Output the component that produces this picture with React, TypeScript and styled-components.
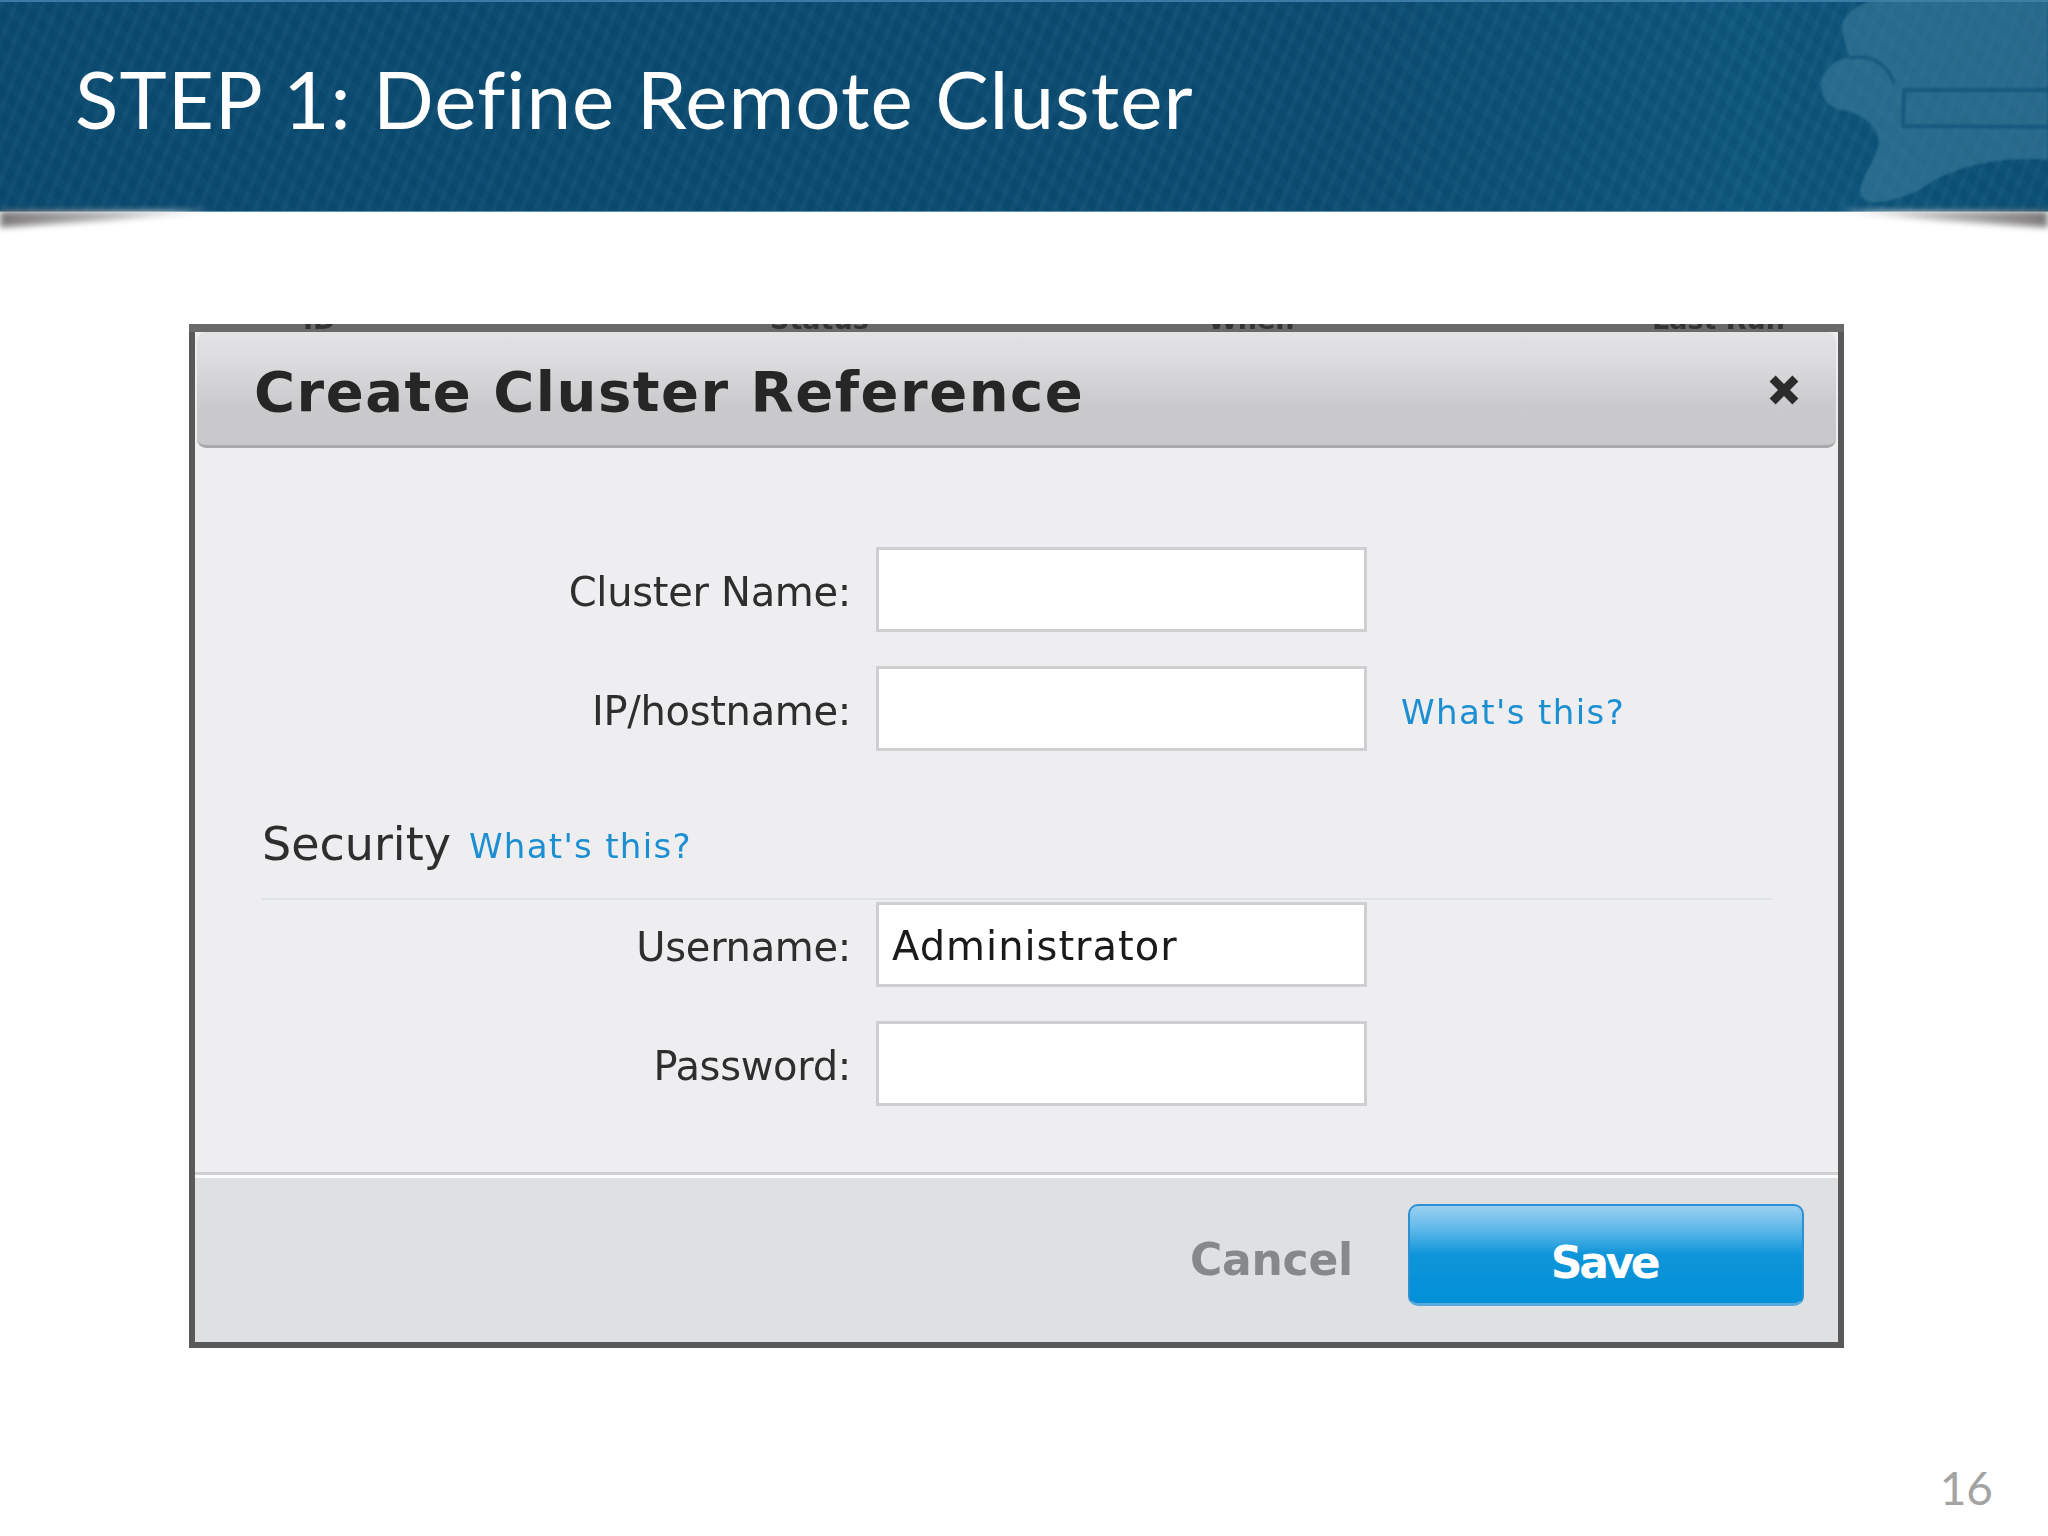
import React from "react";
import styled, { createGlobalStyle } from "styled-components";

const GlobalStyle = createGlobalStyle`
  html, body {
    margin: 0;
    padding: 0;
    background: #fff;
  }
`;

const HeaderLogo = () => (
  <LogoSvg viewBox="0 0 248 212">
    <path
      d="M43 22 C50 8 66 0 84 0 L248 0 L248 160 C205 156 165 164 135 180 C118 192 100 200 78 202 C58 204 58 190 64 178 C72 160 84 148 76 132 C70 120 56 112 42 110 C26 108 18 92 22 80 C26 66 38 58 50 58 C46 46 40 32 43 22 Z"
      fill="#3f7f9f"
      fillOpacity="0.55"
    />
    <path
      d="M248 90 L104 90 L103 126 L248 127"
      fill="none"
      stroke="#15577e"
      strokeWidth="3.5"
    />
    <path
      d="M50 58 C68 54 88 62 94 84"
      fill="none"
      stroke="#15577e"
      strokeWidth="3"
    />
  </LogoSvg>
);

const App = () => {
  return (
    <Slide>
      <GlobalStyle />
      <Banner>
        <BannerTitle>STEP 1: Define Remote Cluster</BannerTitle>
        <HeaderLogo />
        <CornerShadow $side="left" />
        <CornerShadow $side="right" />
      </Banner>

      <Dialog>
        <BehindStrip>
          <BehindText $w={467}>ID</BehindText>
          <BehindText $w={438}>Status</BehindText>
          <BehindText $w={444}>When</BehindText>
          <BehindText $w={160}>Last Run</BehindText>
        </BehindStrip>

        <DialogHead>
          <DialogTitle>Create Cluster Reference</DialogTitle>
          <CloseIcon viewBox="0 0 30 30">
            <path d="M3 8 L8 3 L15 10 L22 3 L27 8 L20 15 L27 22 L22 27 L15 20 L8 27 L3 22 L10 15 Z" />
          </CloseIcon>
        </DialogHead>

        <DialogBody>
          <FieldGroup>
            <Field>
              <FieldLabel>Cluster Name:</FieldLabel>
              <FieldInput />
            </Field>
            <Field>
              <FieldLabel>IP/hostname:</FieldLabel>
              <FieldInput />
              <HelpLink $big>What's this?</HelpLink>
            </Field>
          </FieldGroup>

          <SectionHead>
            <SectionTitle>Security</SectionTitle>
            <HelpLink>What's this?</HelpLink>
          </SectionHead>

          <FieldGroup>
            <Field>
              <FieldLabel>Username:</FieldLabel>
              <FieldInput>Administrator</FieldInput>
            </Field>
            <Field>
              <FieldLabel>Password:</FieldLabel>
              <FieldInput />
            </Field>
          </FieldGroup>
        </DialogBody>

        <DialogFoot>
          <CancelButton>Cancel</CancelButton>
          <SaveButton>Save</SaveButton>
        </DialogFoot>
      </Dialog>

      <PageNumber>16</PageNumber>
    </Slide>
  );
};

export default App;

const Slide = styled.div`
  width: 2048px;
  height: 1536px;
  display: flex;
  flex-direction: column;
  overflow: hidden;
  background: #fff;
`;

const Banner = styled.header`
  position: relative;
  height: 212px;
  flex: none;
  display: flex;
  align-items: flex-start;
  padding-left: 75px;
  box-sizing: border-box;
  border-top: 2px solid #3a7ca5;
  border-bottom: 1px solid #5f93b0;
  background:
    repeating-linear-gradient(
      112deg,
      rgba(255, 255, 255, 0.022) 0 5px,
      rgba(0, 0, 0, 0.012) 5px 13px
    ),
    repeating-linear-gradient(
      42deg,
      rgba(255, 255, 255, 0.01) 0 9px,
      rgba(0, 0, 0, 0.02) 9px 19px
    ),
    linear-gradient(90deg, #0a4a70 0%, #0b4c72 65%, #0d567c 85%, #0b5076 100%);
`;

const BannerTitle = styled.h1`
  margin: 48px 0 0;
  font-family: "Lato", "Open Sans", sans-serif;
  font-weight: 400;
  font-size: 80px;
  line-height: 96px;
  letter-spacing: 1px;
  font-variant-ligatures: none;
  color: #fff;
  white-space: nowrap;
  filter: blur(0.4px);
`;

const LogoSvg = styled.svg`
  position: absolute;
  right: 0;
  top: -2px;
  width: 248px;
  height: 212px;
  filter: blur(1px);
`;

const CornerShadow = styled.div<{ $side: "left" | "right" }>`
  position: absolute;
  top: 100%;
  ${(p) => (p.$side === "left" ? "left: 0;" : "right: 0;")}
  width: 210px;
  height: 22px;
  filter: blur(3px);

  &::before {
    content: "";
    display: block;
    height: 100%;
    background: linear-gradient(
      ${(p) => (p.$side === "left" ? "90deg" : "270deg")},
      #7c7a7a 0%,
      #a8a6a6 40%,
      #eeeeee 100%
    );
    clip-path: ${(p) =>
      p.$side === "left"
        ? "polygon(0 0, 100% 0, 55% 40%, 0 75%)"
        : "polygon(0 0, 100% 0, 100% 75%, 45% 40%)"};
  }
`;

const Dialog = styled.section`
  width: 1655px;
  height: 1024px;
  flex: none;
  margin: 112px 0 0 189px;
  box-sizing: border-box;
  border: 6px solid #595959;
  border-top: 0;
  display: flex;
  flex-direction: column;
  background: #eeeef0;
  box-shadow: inset 0 -1px 0 #48484a;
`;

const BehindStrip = styled.div`
  height: 8px;
  flex: none;
  margin: 0 -6px;
  padding-left: 114px;
  display: flex;
  overflow: hidden;
  background: #6a6a6a;
`;

const BehindText = styled.span<{ $w: number }>`
  width: ${(p) => p.$w}px;
  height: 8px;
  flex: none;
  margin-top: -8px;
  font-family: "DejaVu Sans", sans-serif;
  font-weight: 700;
  font-size: 27px;
  line-height: 8px;
  color: #333;
  white-space: nowrap;
  filter: blur(0.6px);
`;

const DialogHead = styled.div`
  height: 116px;
  flex: none;
  margin: 0 2px;
  padding: 5px 34px 0 57px;
  display: flex;
  align-items: center;
  justify-content: space-between;
  box-sizing: border-box;
  border-radius: 9px;
  border-bottom: 3px solid #a9a9ab;
  background: linear-gradient(#e3e3e5 0%, #dcdcde 25%, #cacacc 65%, #c8c8ca 100%);
`;

const DialogTitle = styled.h2`
  margin: 0;
  font-family: "DejaVu Sans", sans-serif;
  font-weight: 700;
  font-size: 56px;
  letter-spacing: 1.5px;
  color: #262626;
  white-space: nowrap;
  filter: blur(0.7px);
`;

const CloseIcon = styled.svg`
  width: 36px;
  height: 36px;
  margin-bottom: 2px;
  fill: #2b2b2b;
`;

const DialogBody = styled.div`
  flex: 1;
  padding: 99px 66px 0 67px;
  display: flex;
  flex-direction: column;
`;

const FieldGroup = styled.div`
  display: flex;
  flex-direction: column;
  gap: 34px;
`;

const Field = styled.div`
  display: flex;
  align-items: center;
`;

const FieldLabel = styled.label`
  width: 589px;
  flex: none;
  margin-right: 25px;
  padding-top: 4px;
  text-align: right;
  font-family: "DejaVu Sans", sans-serif;
  font-size: 40px;
  letter-spacing: -0.3px;
  color: #2e2e2e;
  filter: blur(0.5px);
`;

const FieldInput = styled.div`
  width: 491px;
  height: 85px;
  flex: none;
  box-sizing: border-box;
  padding: 2px 0 0 13px;
  display: flex;
  align-items: center;
  border: 3px solid #cfcfd1;
  background: #fff;
  font-family: "DejaVu Sans", sans-serif;
  font-size: 40px;
  letter-spacing: 1px;
  color: #1a1a1a;
  filter: blur(0.4px);
`;

const HelpLink = styled.a<{ $big?: boolean }>`
  margin-left: ${(p) => (p.$big ? "34px" : "18px")};
  padding-top: ${(p) => (p.$big ? "6px" : "4px")};
  font-family: "DejaVu Sans", sans-serif;
  font-size: 34px;
  letter-spacing: ${(p) => (p.$big ? "1.4px" : "1.3px")};
  color: #1b8fd1;
  white-space: nowrap;
  filter: blur(0.5px);
`;

const SectionHead = styled.div`
  height: 149px;
  flex: none;
  box-sizing: border-box;
  padding-bottom: 32px;
  margin-bottom: 2px;
  display: flex;
  align-items: flex-end;
  border-bottom: 2px solid #dde3e5;
`;

const SectionTitle = styled.span`
  margin-bottom: -4px;
  font-family: "DejaVu Sans", sans-serif;
  font-size: 46px;
  line-height: 52px;
  color: #2e2e2e;
  filter: blur(0.5px);
`;

const DialogFoot = styled.div`
  height: 170px;
  flex: none;
  box-sizing: border-box;
  padding: 29px 34px 0 0;
  display: flex;
  align-items: flex-start;
  justify-content: flex-end;
  gap: 55px;
  background: #dfe0e2;
  border-top: 3px solid #d0d0d2;
  box-shadow: inset 0 3px 0 #fbfbfc;
`;

const CancelButton = styled.span`
  margin-top: 30px;
  font-family: "DejaVu Sans", sans-serif;
  font-weight: 700;
  font-size: 44px;
  letter-spacing: -0.2px;
  color: #87888a;
  filter: blur(0.6px);
`;

const SaveButton = styled.button`
  width: 396px;
  height: 102px;
  box-sizing: border-box;
  padding: 15px 4px 0 0;
  border: 2px solid #2f8fd3;
  border-bottom: 3px solid #5aa9de;
  border-radius: 10px;
  background: linear-gradient(#9ad0f1 0%, #5cb7e9 25%, #0f95d9 50%, #0090d7 100%);
  font-family: "DejaVu Sans", sans-serif;
  font-weight: 700;
  font-size: 44px;
  letter-spacing: -3.4px;
  color: #fff;
`;

const PageNumber = styled.div`
  margin: 112px 55px 0 0;
  text-align: right;
  font-family: "Lato", sans-serif;
  font-size: 46px;
  line-height: 56px;
  color: #a3a3a3;
`;
